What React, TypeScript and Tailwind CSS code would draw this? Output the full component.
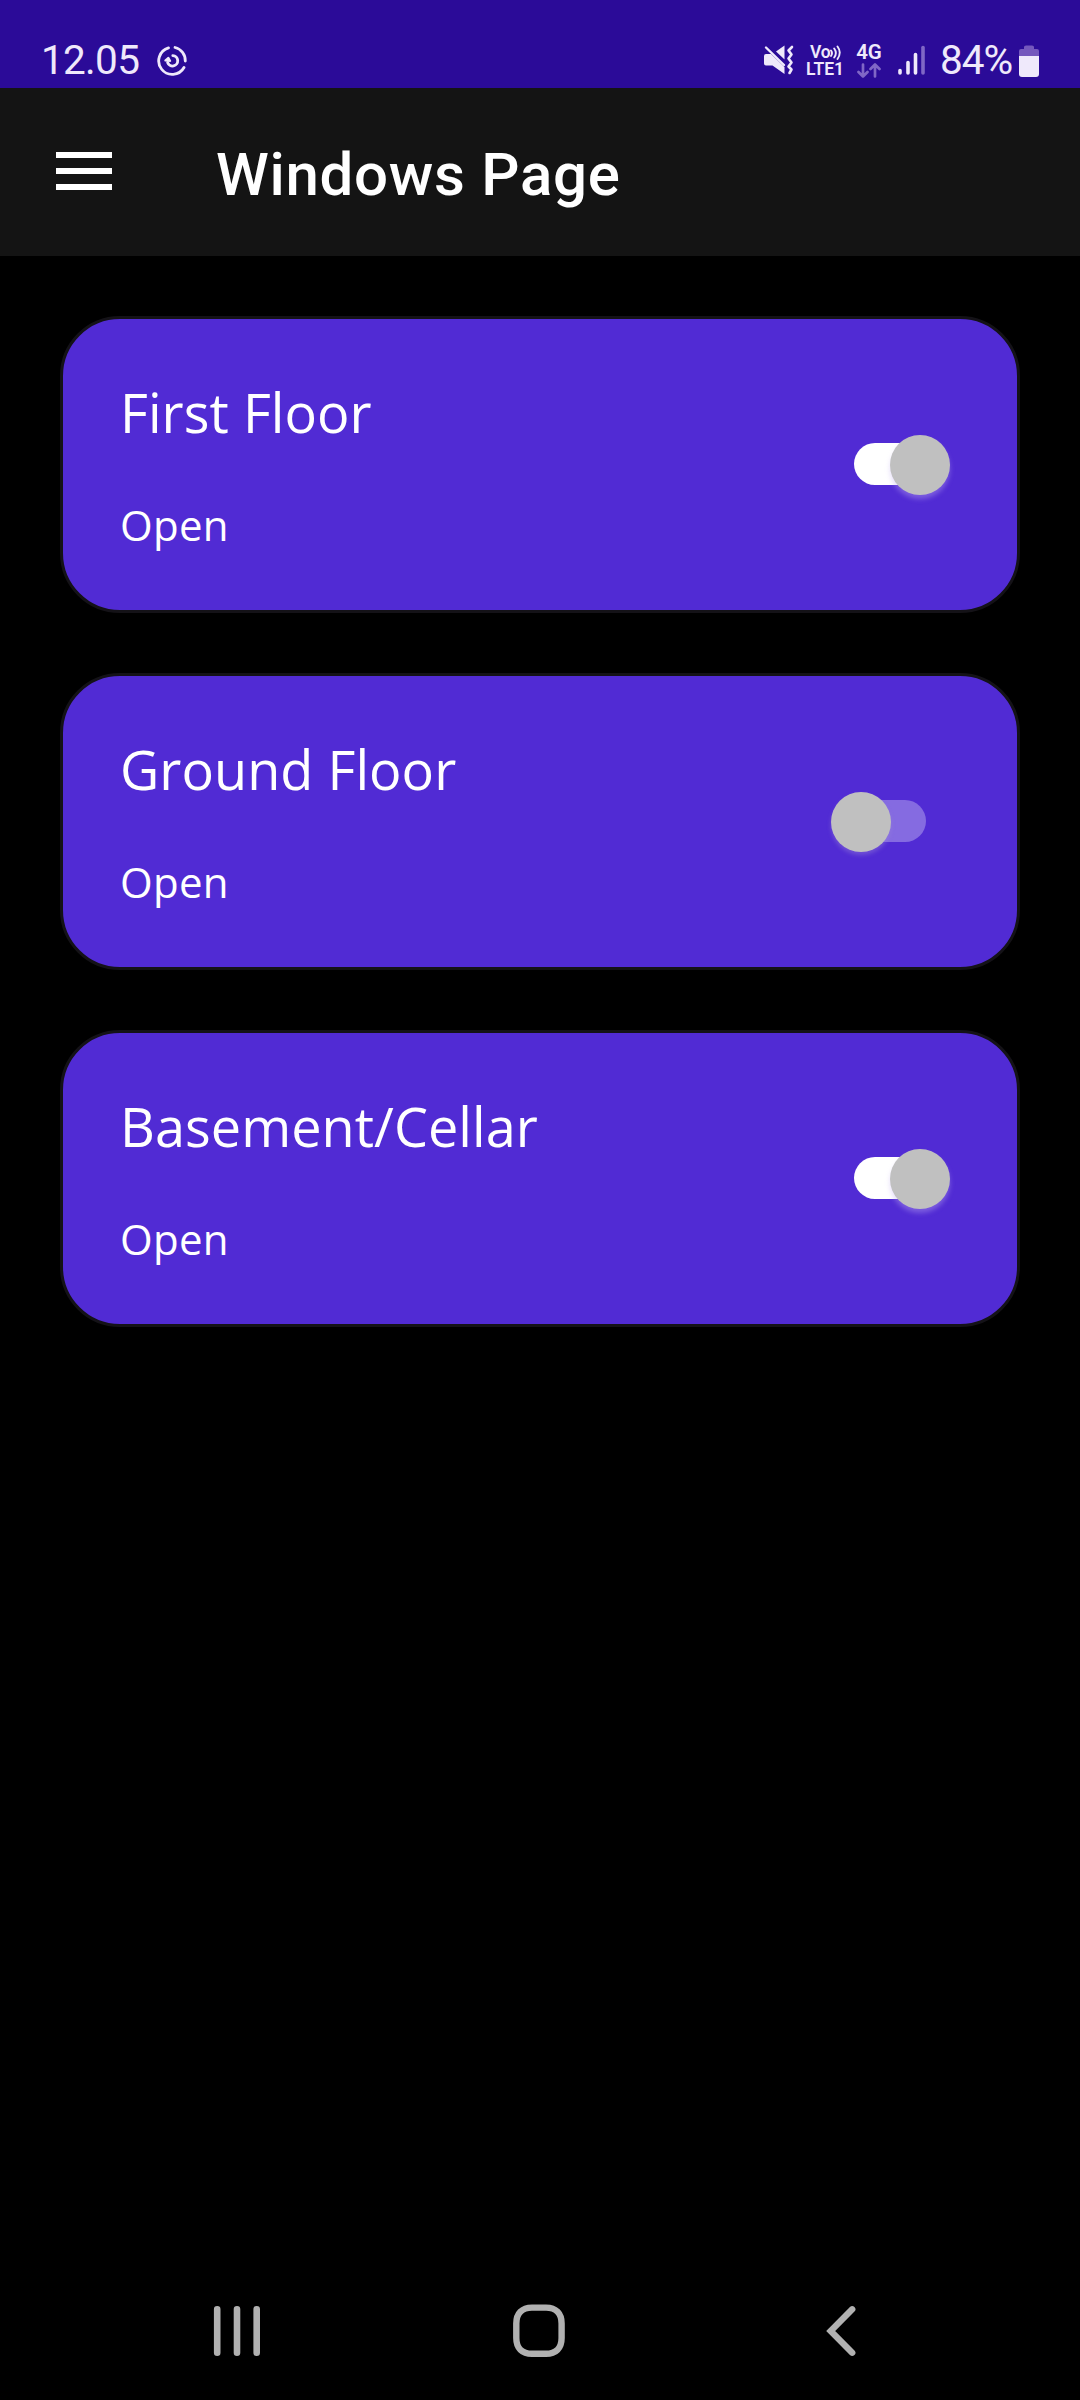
import React, { useState } from 'react';

function RoutineIcon() {
  return (
    <svg className="ml-[17px] block size-[32px]" viewBox="156 45 32 32" fill="none" stroke="#efe9fb" strokeLinecap="round" strokeLinejoin="round">
      <path d="M168.5 47.9 A13.5 13.5 0 1 0 184 67.5" strokeWidth="2.8" />
      <path d="M175 47.5 A13.5 13.5 0 0 1 185.3 61" strokeWidth="2.8" />
      <path d="M172.8 55.6 A5.2 5.2 0 1 1 167.6 62.5" strokeWidth="2.8" />
      <path d="M165.3 60.6 L168.4 57.8 L170.2 61 Z" fill="#efe9fb" strokeWidth="2" />
    </svg>
  );
}

function MuteVibrateIcon() {
  return (
    <svg className="block h-[30px] w-[30px]" viewBox="764 46 30 30" fill="none">
      <path d="M766 55 H771 L784.5 68 V75 L772.5 66.5 H766 Q764 66.5 764 64.5 V57 Q764 55 766 55 Z" fill="#efe9fb" />
      <path d="M776 52.5 L784.5 46.5 V60.5 Z" fill="#efe9fb" />
      <path d="M766 48.5 L784 66" stroke="#efe9fb" strokeWidth="2.4" strokeLinecap="round" />
      <path d="M792 48 L788.5 51.5 L791.5 55.5 L788.5 59.5 L791.5 63.5 L788.5 67.5 L791.5 70.5 L789.5 74" stroke="#efe9fb" strokeWidth="2.6" strokeLinecap="round" strokeLinejoin="round" />
    </svg>
  );
}

function StatusBar() {
  return (
    <header className="flex h-[88px] items-start bg-[#2b0b98] pl-[41px] pr-[41px] pt-[45px] text-[#efe9fb]">
      <span className="-mt-[5px] w-[98px] whitespace-nowrap text-[40.5px] leading-[40px] tracking-[-0.7px]">12.05</span>
      <RoutineIcon />
      <div className="flex-1" />
      <MuteVibrateIcon />
      <div className="ml-[12px] flex w-[41px] flex-col">
        <div className="flex h-[15px] items-center pl-[4px]">
          <span className="text-[17.5px] font-semibold leading-[15px] tracking-[-0.3px]">Vo</span>
          <svg className="block h-[15px] w-[11px]" viewBox="0 0 11 15" fill="none" stroke="#efe9fb" strokeWidth="1.9" strokeLinecap="round">
            <path d="M1 5.5 Q3 8 1 11 M4.2 3.5 Q7.5 8 4.2 12.5 M7.5 1.5 Q12 7.5 7.5 14" />
          </svg>
        </div>
        <span className="mt-px text-[17.5px] font-semibold leading-[17px]">LTE1</span>
      </div>
      <div className="ml-[9px] flex w-[26px] flex-col items-center">
        <span className="-mt-px text-[20.5px] font-semibold leading-[17px]">4G</span>
        <svg className="mt-[2px] block h-[15px] w-[24px]" viewBox="0 0 24 15" fill="none" stroke="#8067c6" strokeWidth="2.7" strokeLinecap="round" strokeLinejoin="round">
          <path d="M6 1.5 V13.5 M1.5 9 L6 13.5 L10.5 9 M18 13.5 V1.5 M13.5 6 L18 1.5 L22.5 6" />
        </svg>
      </div>
      <svg className="ml-[16px] block h-[30px] w-[28px]" viewBox="898 45 28 30" strokeWidth="3.6" strokeLinecap="round">
        <path d="M900 70.5 V73 M908 62.5 V73 M915.5 54.5 V73" stroke="#efe9fb" />
        <path d="M923 47.5 V73" stroke="#8067c6" />
      </svg>
      <span className="-mt-[5px] ml-[14px] w-[74px] whitespace-nowrap text-[40.5px] leading-[40px] tracking-[-1px]">84%</span>
      <svg className="ml-[5px] block h-[32px] w-[20px]" viewBox="1019 45 20 32">
        <path d="M1019 56 V51 Q1019 49 1021 49 H1024 V47 Q1024 45.5 1026 45.5 H1032 Q1034 45.5 1034 47 V49 H1037 Q1039 49 1039 51 V56 Z" fill="#7558bd" />
        <path d="M1019 56 H1039 V74 Q1039 77 1036 77 H1022 Q1019 77 1019 74 Z" fill="#efe9fb" />
      </svg>
    </header>
  );
}

function Toggle({ on, onToggle, label }: { on: boolean; onToggle: () => void; label: string }) {
  return (
    <button
      type="button"
      role="switch"
      aria-checked={on}
      aria-label={label}
      onClick={onToggle}
      className={`relative -mt-px h-[42px] w-[72px] rounded-full ${on ? 'bg-white' : 'bg-white/30'}`}
    >
      <span
        className={`absolute -top-[8.5px] size-[60px] rounded-full bg-[#c0c0c0] ${on ? 'left-[35.5px] shadow-[0_4px_5px_rgba(190,170,240,0.4)]' : '-left-[23.5px] shadow-[0_3px_4px_rgba(160,140,215,0.4)]'}`}
      />
    </button>
  );
}

function WindowCard({ title, status, initial }: { title: string; status: string; initial: boolean }) {
  const [on, setOn] = useState(initial);
  return (
    <section className="flex h-[297px] items-center justify-between rounded-[60px] border-[3px] border-[#141217] bg-[#512bd4] pl-[57px] pr-[91px] font-['Open_Sans',sans-serif] text-white">
      <div className="flex h-full flex-col pt-[56px]">
        <h2 className="text-[54px] leading-[74px] tracking-[0.05px]">{title}</h2>
        <p className="mt-[47px] text-[42px] leading-[58px] tracking-[0.3px]">{status}</p>
      </div>
      <Toggle on={on} onToggle={() => setOn(!on)} label={title} />
    </section>
  );
}

const rooms = [
  { title: 'First Floor', status: 'Open', initial: true },
  { title: 'Ground Floor', status: 'Open', initial: false },
  { title: 'Basement/Cellar', status: 'Open', initial: true },
];

export default function App() {
  return (
    <div className="flex h-[2400px] w-[1080px] flex-col overflow-hidden bg-black font-[Roboto,sans-serif]">
      <StatusBar />
      <div className="flex h-[168px] items-center bg-[#141414] pl-[56px] text-white">
        <button type="button" aria-label="Menu" className="-mt-[2px] flex w-[56px] flex-col gap-[10px]">
          <span className="h-[6px] bg-white" />
          <span className="h-[6px] bg-white" />
          <span className="h-[6px] bg-white" />
        </button>
        <h1 className="ml-[104px] pt-[5px] text-[60px] font-medium leading-[70px] tracking-[0.7px]">Windows Page</h1>
      </div>
      <main className="flex flex-1 flex-col gap-[60px] px-[60px] pt-[60px]">
        {rooms.map((room) => (
          <WindowCard key={room.title} {...room} />
        ))}
      </main>
      <nav className="flex h-[144px] items-center pl-[212px] pt-[6px]">
        <svg className="block h-[54px] w-[50px]" viewBox="212 2304 50 54" stroke="#b1b1b1" strokeWidth="6.6" strokeLinecap="round">
          <path d="M217.2 2309.3 V2352.7 M237 2309.3 V2352.7 M256.7 2309.3 V2352.7" />
        </svg>
        <svg className="ml-[250px] block h-[54px] w-[54px]" viewBox="512 2304 54 54" fill="none" stroke="#b1b1b1" strokeWidth="6.4">
          <path d="M532 2307.6 H546 C556 2307.6 561.6 2313.5 561.6 2323.5 V2338 C561.6 2348 556 2353.8 546 2353.8 H532 C522 2353.8 516.3 2348 516.3 2338 V2323.5 C516.3 2313.5 522 2307.6 532 2307.6 Z" />
        </svg>
        <svg className="ml-[258px] block h-[54px] w-[34px]" viewBox="824 2304 34 54" fill="none" stroke="#b1b1b1" strokeWidth="6.4" strokeLinecap="round">
          <path d="M852.2 2309.3 L830.7 2331 L852.2 2352.7" />
        </svg>
      </nav>
    </div>
  );
}
